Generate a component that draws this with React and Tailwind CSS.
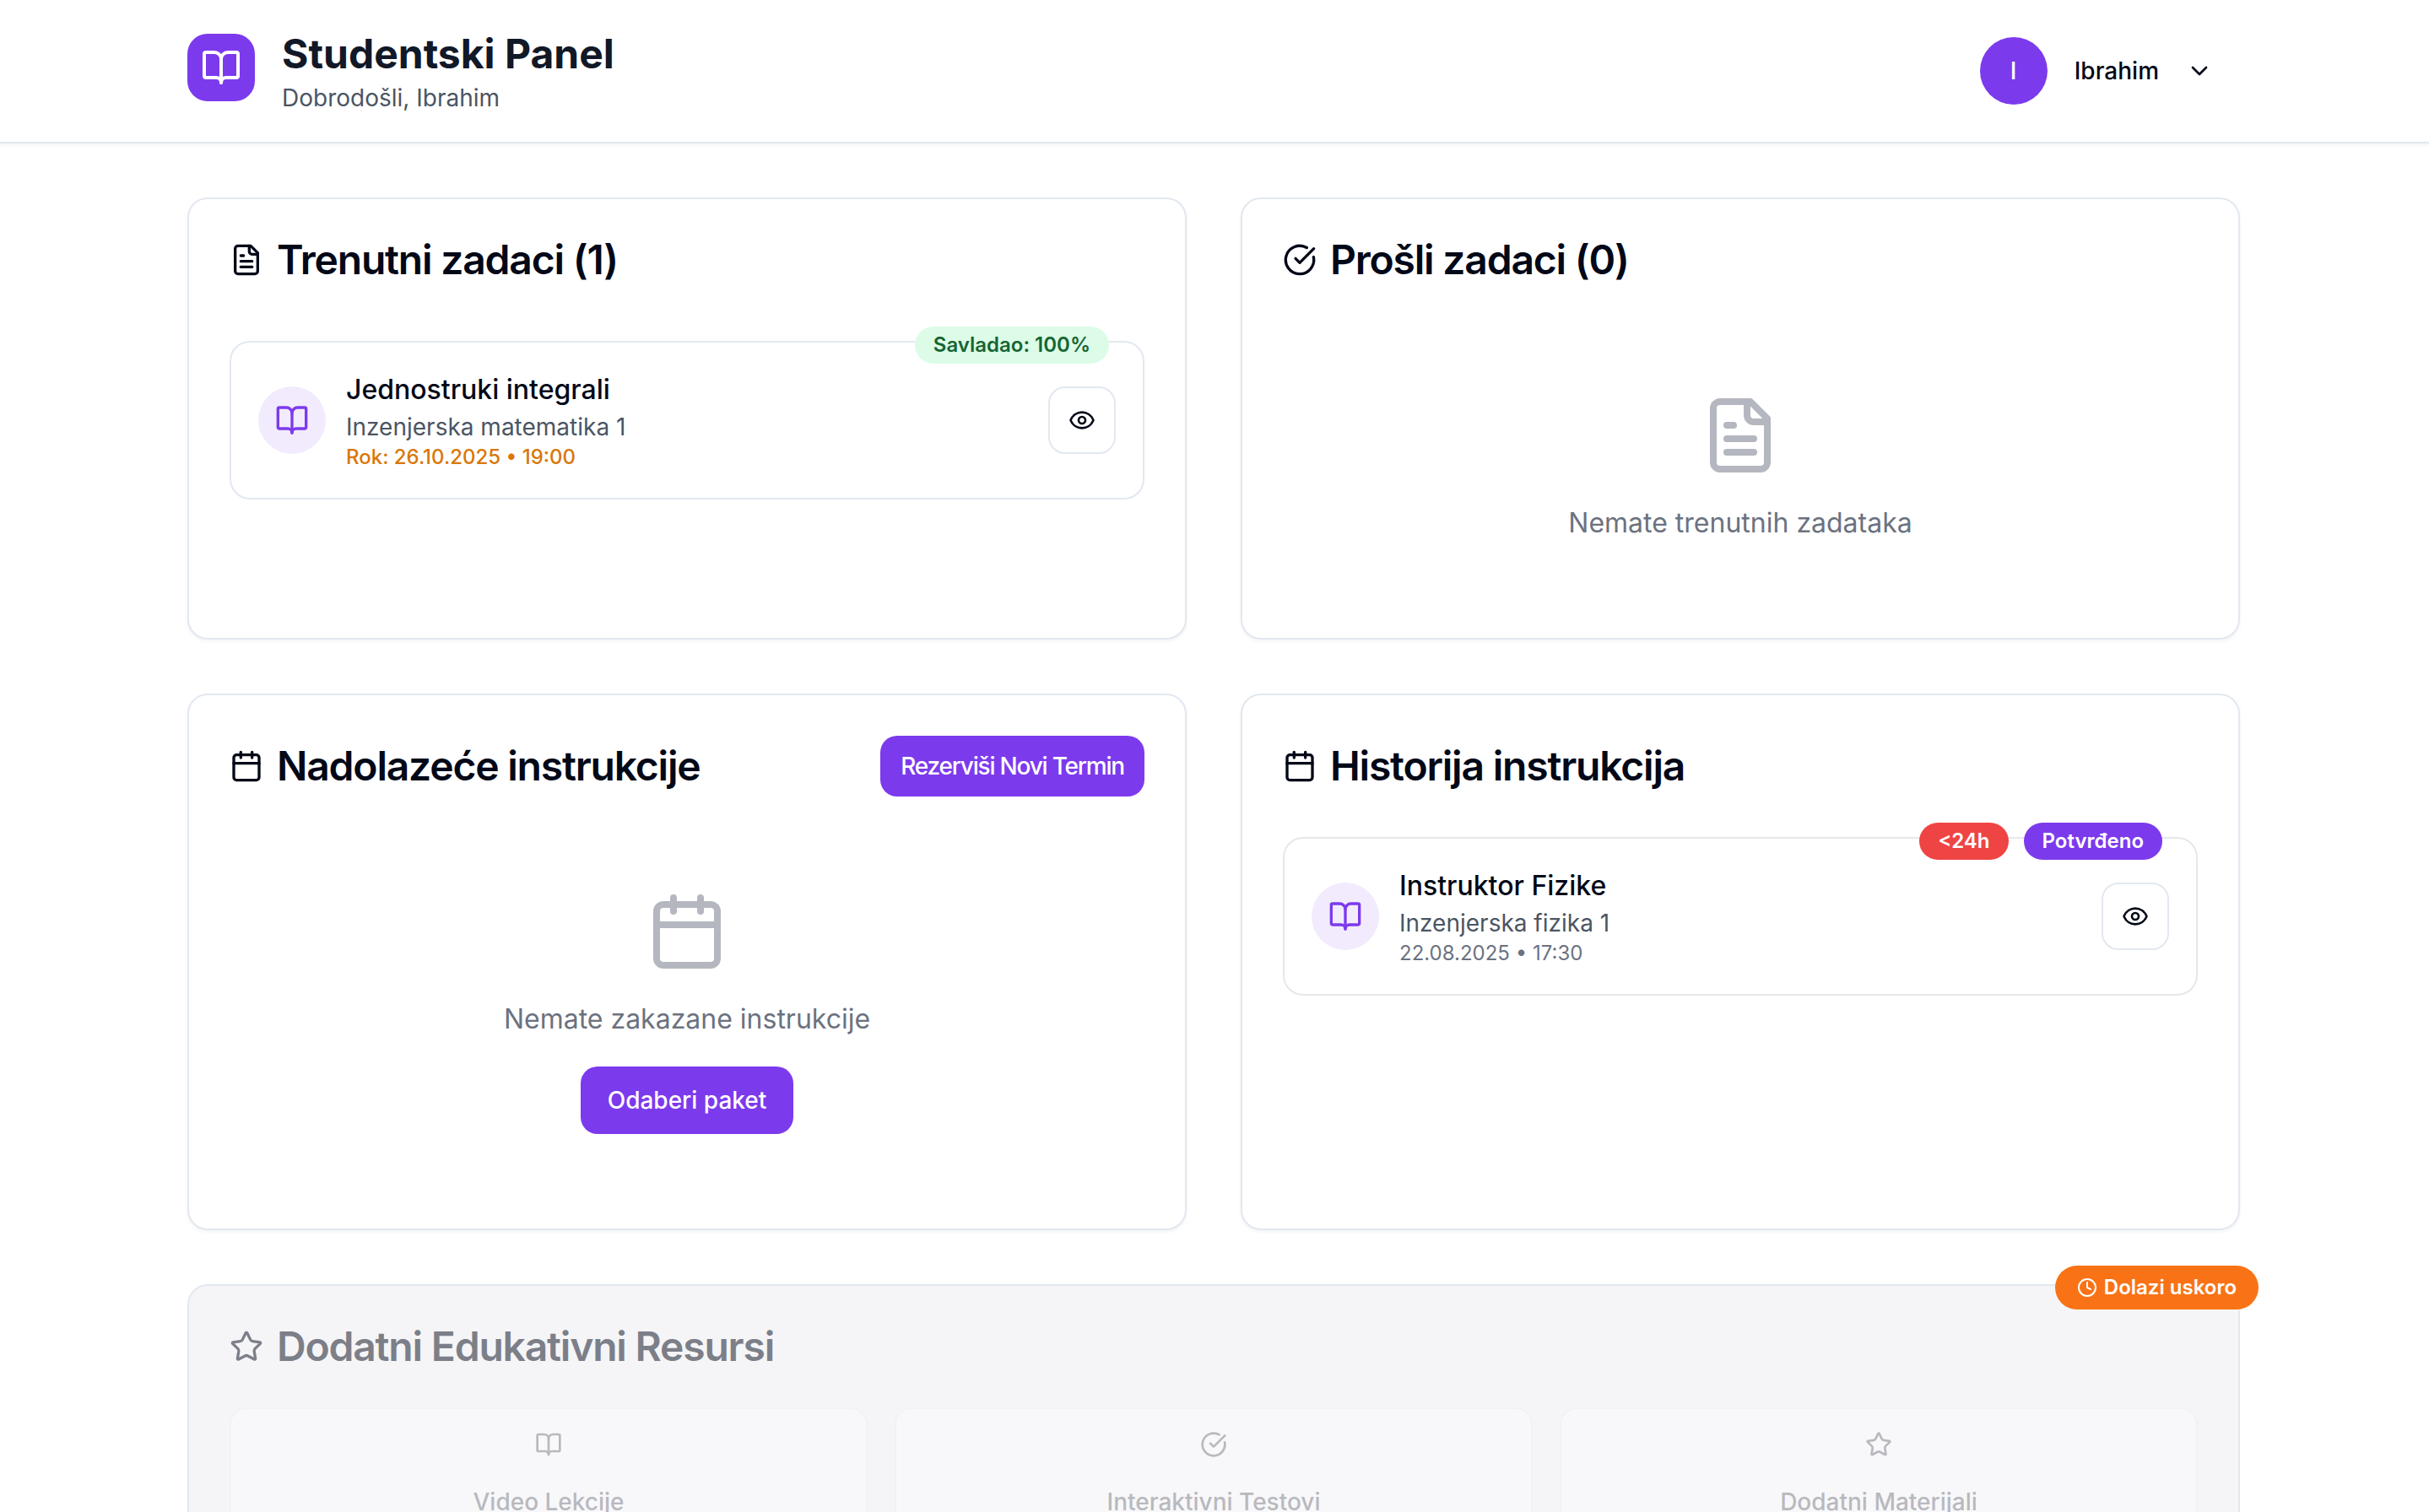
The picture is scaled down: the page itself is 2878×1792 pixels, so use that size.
import { BookOpen, Calendar, ChevronDown, CircleCheckBig, Clock, Eye, Star } from "lucide-react";

function FileText({ className }) {
  return (
    <svg
      viewBox="0 0 24 24"
      fill="none"
      stroke="currentColor"
      strokeWidth="2"
      strokeLinecap="round"
      strokeLinejoin="round"
      aria-hidden="true"
      className={className}
    >
      <path d="M15 2H6a2 2 0 0 0-2 2v16a2 2 0 0 0 2 2h12a2 2 0 0 0 2-2V7Z" />
      <path d="M14 2v4a2 2 0 0 0 2 2h4" />
      <path d="M10 9H8" />
      <path d="M16 13H8" />
      <path d="M16 17H8" />
    </svg>
  );
}

function Card({ children }) {
  return (
    <section className="flex flex-col rounded-3xl border-2 border-slate-200 bg-white shadow-[0_2px_4px_rgba(0,0,0,0.05)]">
      {children}
    </section>
  );
}

function CardTitle({ icon: Icon, action, children }) {
  return (
    <h2 className="flex items-center justify-between text-[48px] leading-[48px] font-semibold tracking-tight">
      <span className="flex items-center gap-4">
        <Icon className="size-10 shrink-0" />
        {children}
      </span>
      {action}
    </h2>
  );
}

function Badge({ className, children }) {
  return (
    <span
      className={`inline-flex items-center rounded-full px-[22px] py-1.5 text-[24px] leading-8 font-semibold ${className}`}
    >
      {children}
    </span>
  );
}

function Item({ title, subject, time, timeClass, borderClass, badges }) {
  return (
    <article className={`relative flex items-center justify-between rounded-3xl border-2 p-8 ${borderClass}`}>
      <div className="absolute -top-[19px] right-10 flex gap-[18px]">{badges}</div>
      <div className="flex items-center gap-6">
        <div className="flex size-20 items-center justify-center rounded-full bg-[#f2ebfd]">
          <BookOpen className="size-10 text-[#7c3aed]" />
        </div>
        <div>
          <h3 className="text-[32px] leading-[48px] font-medium">{title}</h3>
          <p className="text-[28px] leading-10 text-[#4b5563]">{subject}</p>
          <p className={`text-[24px] leading-8 ${timeClass}`}>{time}</p>
        </div>
      </div>
      <button
        type="button"
        aria-label={`Pogledaj: ${title}`}
        className="flex size-20 items-center justify-center rounded-[20px] border-2 border-slate-200 bg-white"
      >
        <Eye className="size-8" />
      </button>
    </article>
  );
}

function Empty({ icon: Icon, text, children }) {
  return (
    <div className="flex flex-col items-center py-16 text-[#6b7280]">
      <Icon className="mb-8 size-24 opacity-50" />
      <p className="text-[32px] leading-[48px]">{text}</p>
      {children}
    </div>
  );
}

function Resource({ icon: Icon, children }) {
  return (
    <button
      type="button"
      disabled
      className="flex flex-col items-center gap-8 rounded-[20px] border-2 border-[#f2f2f4] bg-[#f8f8fa] px-8 py-[26px] text-[28px] leading-10 font-medium text-[#b8b9be]"
    >
      <Icon className="size-8" />
      {children}
    </button>
  );
}

export default function App() {
  return (
    <div className="min-h-screen bg-white font-['Inter',sans-serif] text-[#020817]">
      <header className="border-b-2 border-slate-200 bg-white pr-0.5 shadow-[0_2px_4px_rgba(0,0,0,0.05)]">
        <div className="mx-auto flex max-w-[2560px] items-center justify-between px-16 py-8">
          <div className="flex items-center gap-8">
            <div className="mb-2 flex size-20 items-center justify-center rounded-3xl bg-[#7c3aed]">
              <BookOpen className="size-12 text-white" />
            </div>
            <div>
              <h1 className="text-[48px] leading-[64px] font-bold text-[#111827]">Studentski Panel</h1>
              <p className="text-[28px] leading-10 text-[#4b5563]">Dobrodošli, Ibrahim</p>
            </div>
          </div>
          <button type="button" className="flex items-center gap-8 px-8 text-[28px] leading-10 font-medium">
            <span className="flex size-20 items-center justify-center rounded-full bg-[#7c3aed] text-white">I</span>
            Ibrahim
            <ChevronDown className="size-8" />
          </button>
        </div>
      </header>

      <main className="pr-0.5">
        <div className="mx-auto flex max-w-[2560px] flex-col gap-16 px-16 py-16">
          <div className="grid grid-cols-2 gap-16">
            <Card>
              <div className="p-12">
                <CardTitle icon={FileText}>Trenutni zadaci (1)</CardTitle>
              </div>
              <div className="px-12 pt-6 pb-12">
                <Item
                  title="Jednostruki integrali"
                  subject="Inzenjerska matematika 1"
                  time="Rok: 26.10.2025 • 19:00"
                  timeClass="font-medium text-[#d97706]"
                  borderClass="border-slate-200"
                  badges={<Badge className="bg-[#dcfce7] text-[#166534]">Savladao: 100%</Badge>}
                />
              </div>
            </Card>

            <Card>
              <div className="p-12">
                <CardTitle icon={CircleCheckBig}>Prošli zadaci (0)</CardTitle>
              </div>
              <div className="px-12 pt-6 pb-12">
                <Empty icon={FileText} text="Nemate trenutnih zadataka" />
              </div>
            </Card>

            <Card>
              <div className="p-12">
                <CardTitle
                  icon={Calendar}
                  action={
                    <button
                      type="button"
                      className="h-18 rounded-[20px] bg-[#7c3aed] px-6 text-[28px] leading-10 font-medium text-white"
                    >
                      Rezerviši Novi Termin
                    </button>
                  }
                >
                  Nadolazeće instrukcije
                </CardTitle>
              </div>
              <div className="px-12 pb-12">
                <Empty icon={Calendar} text="Nemate zakazane instrukcije">
                  <button
                    type="button"
                    className="mt-8 h-20 rounded-[20px] bg-[#7c3aed] px-8 text-[28px] leading-10 font-medium text-white"
                  >
                    Odaberi paket
                  </button>
                </Empty>
              </div>
            </Card>

            <Card>
              <div className="px-12 py-15">
                <CardTitle icon={Calendar}>Historija instrukcija</CardTitle>
              </div>
              <div className="px-12 pb-12">
                <Item
                  title="Instruktor Fizike"
                  subject="Inzenjerska fizika 1"
                  time="22.08.2025 • 17:30"
                  timeClass="text-[#6b7280]"
                  borderClass="border-gray-200"
                  badges={
                    <>
                      <Badge className="bg-[#ef4444] text-white">&lt;24h</Badge>
                      <Badge className="bg-[#7c3aed] text-white">Potvrđeno</Badge>
                    </>
                  }
                />
              </div>
            </Card>
          </div>

          <section className="relative rounded-3xl border-2 border-slate-200 bg-[#f5f5f8]">
            <span className="absolute -top-6 -right-6 flex items-center gap-2 rounded-full bg-[#f97316] px-[26px] py-2.5 text-[24px] leading-8 font-semibold text-white">
              <Clock className="size-6" />
              Dolazi uskoro
            </span>
            <div className="p-12 text-[#7c7f88]">
              <CardTitle icon={Star}>Dodatni Edukativni Resursi</CardTitle>
            </div>
            <div className="grid grid-cols-3 gap-8 px-12 pb-12">
              <Resource icon={BookOpen}>Video Lekcije</Resource>
              <Resource icon={CircleCheckBig}>Interaktivni Testovi</Resource>
              <Resource icon={Star}>Dodatni Materijali</Resource>
            </div>
          </section>
        </div>
      </main>
    </div>
  );
}
